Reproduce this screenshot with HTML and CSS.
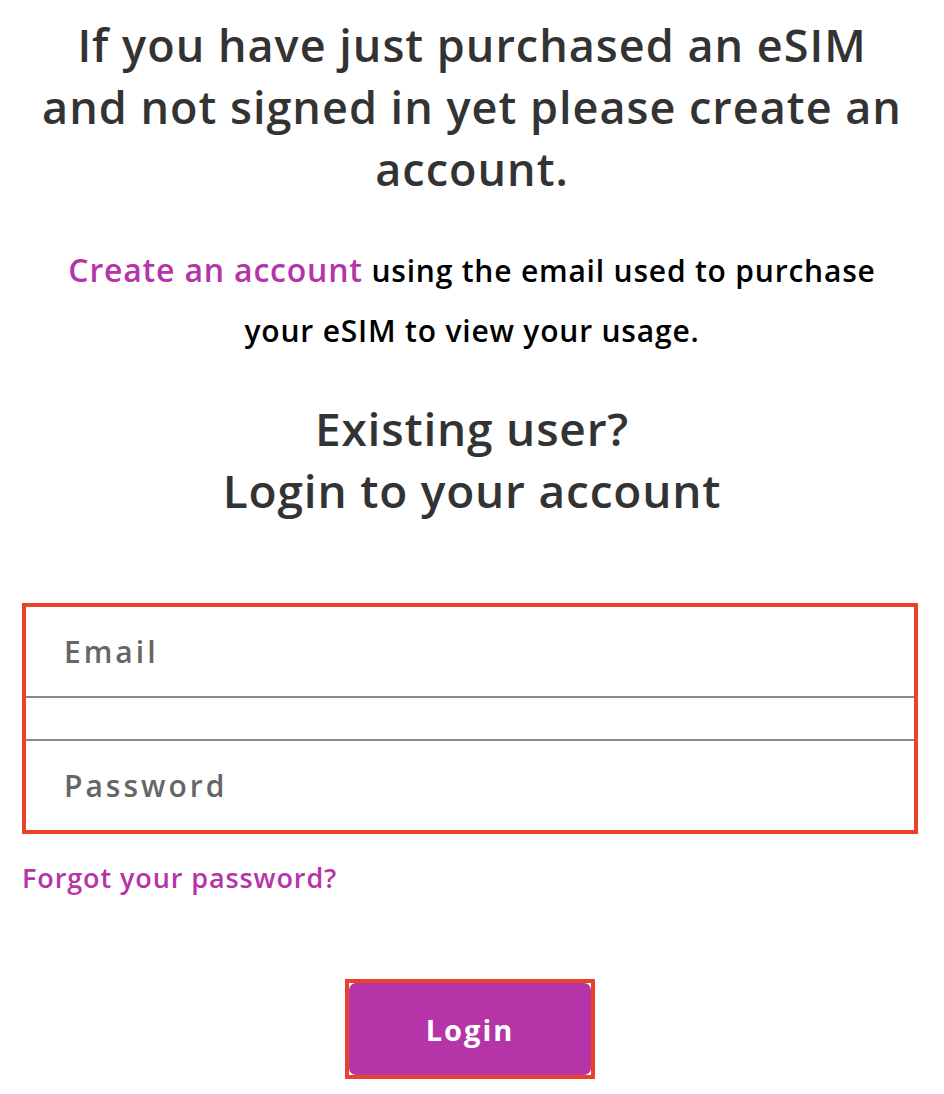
FILE: index.html
```html
<!DOCTYPE html>
<html>
<head>
<meta charset="utf-8">
<link rel="stylesheet" href="styles.css">
</head>
<body>
<main class="page">
  <h1 class="intro">If you have just purchased an eSIM and not signed in yet please create an account.</h1>
  <p class="note"><a class="create" href="#">Create an account</a> using the email used to purchase your eSIM to view your usage.</p>
  <h2 class="existing">Existing user?<br>Login to your account</h2>
  <form class="form">
    <div class="fields">
      <input class="field field-email" type="text" placeholder="Email">
      <input class="field field-pass" type="password" placeholder="Password">
    </div>
    <a class="forgot" href="#">Forgot your password?</a>
    <div class="actions">
      <div class="btn-wrap"><button class="btn" type="button">Login</button></div>
    </div>
  </form>
</main>
</body>
</html>
```
FILE: styles.css
```css
html, body {
  margin: 0;
  padding: 0;
  background: #fff;
}
body {
  font-family: "Open Sans", "Noto Sans", sans-serif;
}
.page {
  width: 944px;
  padding: 14px 0 0;
  box-sizing: border-box;
}
.intro {
  margin: 0 auto;
  width: 880px;
  text-align: center;
  font-size: 45px;
  line-height: 62px;
  font-weight: 600;
  letter-spacing: 1px;
  color: #333;
}
.note {
  margin: 40px auto 0;
  width: 840px;
  text-align: center;
  font-size: 30px;
  line-height: 60px;
  font-weight: 600;
  letter-spacing: 0.8px;
  color: #000;
}
.create {
  color: #b535a9;
  text-decoration: none;
  font-size: 32px;
}
.existing {
  margin: 36px 0 0;
  text-align: center;
  font-size: 46px;
  line-height: 62px;
  font-weight: 600;
  letter-spacing: 0.8px;
  color: #333;
}
.form {
  margin: 82px 0 0 22px;
  width: 896px;
}
.fields {
  border: 4px solid #e8432a;
  display: flex;
  flex-direction: column;
}
.field {
  display: block;
  border: 0;
  outline: none;
  font-family: "Open Sans", "Noto Sans", sans-serif;
  font-size: 30px;
  font-weight: 600;
  letter-spacing: 3px;
  color: #555;
  padding: 0 0 0 38px;
  height: 89px;
  background: #fff;
}
.field::placeholder {
  color: #666;
}
.field-email {
  border-bottom: 2px solid #8a8a8a;
}
.field-pass {
  margin-top: 41px;
  border-top: 2px solid #8a8a8a;
}
.forgot {
  display: block;
  margin-top: 29px;
  color: #b535a9;
  text-decoration: none;
  font-size: 27px;
  line-height: 30px;
  font-weight: 600;
  letter-spacing: 0.9px;
}
.actions {
  display: flex;
  justify-content: center;
  margin-top: 86px;
}
.btn-wrap {
  border: 4px solid #e8432a;
}
.btn {
  display: block;
  width: 242px;
  height: 92px;
  border: 0;
  border-radius: 7px;
  background: #b535a9;
  color: #fff;
  font-family: "Open Sans", "Noto Sans", sans-serif;
  font-size: 29px;
  font-weight: 700;
  letter-spacing: 2px;
  cursor: pointer;
}
```
